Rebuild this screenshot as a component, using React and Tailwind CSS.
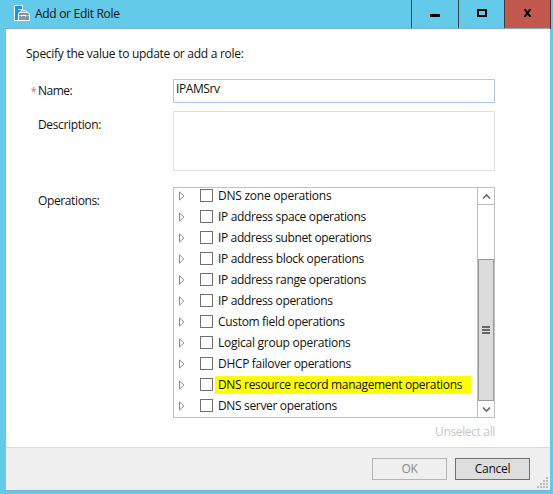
import { useState } from "react";

const operations = [
  { label: "DNS zone operations", spacing: "tracking-[-0.240px]" },
  { label: "IP address space operations", spacing: "tracking-[-0.340px]" },
  { label: "IP address subnet operations", spacing: "tracking-[-0.370px]" },
  { label: "IP address block operations", spacing: "tracking-[-0.320px]" },
  { label: "IP address range operations", spacing: "tracking-[-0.340px]" },
  { label: "IP address operations", spacing: "tracking-[-0.340px]" },
  { label: "Custom field operations", spacing: "tracking-[-0.320px]" },
  { label: "Logical group operations", spacing: "tracking-[-0.250px]" },
  { label: "DHCP failover operations", spacing: "tracking-[-0.320px]" },
  { label: "DNS resource record management operations", spacing: "tracking-[-0.340px]", marked: true },
  { label: "DNS server operations", spacing: "tracking-[-0.340px]" },
];

function ServerIcon() {
  return (
    <svg width="16" height="16" viewBox="0 0 16 16" className="block">
      <path d="M0.500 0.500h8v4.500l-4 3v7.500h-4z" fill="#2391d8" stroke="#fff" />
      <path d="M4 4.500h4" stroke="#fff" />
      <path d="M6.500 7.500V6.500l1-1h4l1 1v1" fill="none" stroke="#fff" />
      <path d="M4.500 8.500l1-1h8.500l1.500 1.500v6.500h-11z" fill="#8296aa" stroke="#fff" />
      <path d="M5 10.500h2.500M11.500 10.500h3.500" stroke="#b9c9d6" />
      <path d="M7.500 10v1.500M11.500 10v1.500M8 10.500h3" stroke="#fff" />
    </svg>
  );
}

function Operation({ label, spacing, marked }) {
  const [checked, setChecked] = useState(false);

  return (
    <div className="flex h-[21px] shrink-0 items-center">
      <svg width="6" height="10" viewBox="0 0 6 10" className="ml-[5px] shrink-0">
        <path d="M0.500 0.900v8.200L4.900 5z" fill="#fff" stroke="#8c8c8c" />
      </svg>
      <button
        onClick={() => setChecked(!checked)}
        className={`ml-[15px] h-[13px] w-[13px] shrink-0 border border-[#707070] ${checked ? "bg-gray-500" : "bg-white"}`}
      />
      <span
        className={`ml-[2px] flex h-[18px] items-center whitespace-nowrap pl-[3px] ${spacing} ${marked ? "w-[256px] bg-[#ffff00]" : ""}`}
      >
        {label}
      </span>
    </div>
  );
}

function Scrollbar() {
  return (
    <div className="flex w-[17px] shrink-0 flex-col border-l border-[#bdbdbd] pt-px">
      <div className="flex h-[16px] shrink-0 items-center justify-center border-b border-[#bdbdbd]">
        <svg width="9" height="7" viewBox="0 0 9 7">
          <path d="M1 5.500l3.500-3.500L8 5.500" fill="none" stroke="#666" strokeWidth="1.600" />
        </svg>
      </div>
      <div className="h-[54px] shrink-0" />
      <div className="flex flex-1 flex-col items-center justify-center gap-px border border-[#999] bg-[#dcdcdc]">
        <div className="h-[2px] w-[8px] bg-[#666]" />
        <div className="h-[2px] w-[8px] bg-[#666]" />
        <div className="h-[2px] w-[8px] bg-[#666]" />
      </div>
      <div className="flex h-[16px] shrink-0 items-center justify-center">
        <svg width="9" height="7" viewBox="0 0 9 7">
          <path d="M1 1.500L4.500 5 8 1.500" fill="none" stroke="#666" strokeWidth="1.600" />
        </svg>
      </div>
    </div>
  );
}

function TitleBar() {
  return (
    <header className="flex h-[29px] shrink-0">
      <div className="flex flex-1 items-start pl-[14px] pt-[5px]">
        <ServerIcon />
        <h1 className="ml-[5px] text-[12px] leading-[18px] tracking-[-0.300px]">Add or Edit Role</h1>
      </div>
      <button className="flex w-[48px] border border-t-0 border-[#37404a] pl-[18px] pt-[14px]">
        <span className="block h-[3px] w-[10px] bg-black" />
      </button>
      <button className="flex w-[46px] border-b border-r border-[#37404a] pl-[18px] pt-[9px]">
        <span className="block h-[8px] w-[10px] border-2 border-black" />
      </button>
      <button className="flex w-[46px] border-b border-r border-[#4a3034] bg-[#c3594e] pl-[18px] pt-[9px]">
        <svg width="10" height="8" viewBox="0 0 10 8">
          <path d="M1.500 0l6 8M7.500 0l-6 8" stroke="#000" strokeWidth="2" />
        </svg>
      </button>
      <div className="w-[2px]" />
    </header>
  );
}

export default function App() {
  const [name, setName] = useState("IPAMSrv");
  const [description, setDescription] = useState("");

  return (
    <div className="flex h-[494px] w-[553px] flex-col overflow-hidden bg-[#64cae9] font-['Open_Sans',sans-serif] text-[12px] leading-[18px] tracking-[-0.270px] text-[#111]">
      <TitleBar />

      <main className="-mt-px ml-[6px] mr-[3px] flex h-[419px] shrink-0 flex-col border-t border-[#7fb0c6] bg-white pl-[20px] pr-[55px]">
        <p className="mt-[16px]">Specify the value to update or add a role:</p>

        <div className="mt-[16px] flex h-[24px]">
          <div className="flex w-[147px] pt-[3px]">
            <span className="w-[12px] pl-[5px] text-[10px] text-[#f4506a]">*</span>
            <label htmlFor="name" className="tracking-[-0.500px]">Name:</label>
          </div>
          <input
            id="name"
            value={name}
            onChange={(e) => setName(e.target.value)}
            className="w-[322px] border border-[#abcbe8] pb-[4px] pl-[2px] tracking-[-0.400px] outline-none"
          />
        </div>

        <div className="mt-[8px] flex h-[60px]">
          <label htmlFor="description" className="w-[147px] pl-[12px] pt-[5px] tracking-[-0.350px]">
            Description:
          </label>
          <textarea
            id="description"
            value={description}
            onChange={(e) => setDescription(e.target.value)}
            className="w-[322px] resize-none border border-[#dcdfe3] outline-none"
          />
        </div>

        <div className="mt-[16px] flex h-[231px]">
          <div className="w-[147px] pl-[12px] pt-[5px] tracking-[-0.380px]">Operations:</div>
          <div className="flex w-[322px] overflow-hidden border border-[#c0c0c0]">
            <div className="-mt-[3px] flex flex-1 flex-col">
              {operations.map((op) => (
                <Operation key={op.label} label={op.label} spacing={op.spacing} marked={op.marked} />
              ))}
            </div>
            <Scrollbar />
          </div>
        </div>

        <div className="mt-[5px] text-right tracking-[-0.350px] text-[#c6c6c6]">Unselect all</div>
      </main>

      <footer className="ml-[6px] mr-[3px] flex h-[43px] shrink-0 border-t border-[#d9d9d9] bg-[#efefef] pt-[10px]">
        <button className="ml-[366px] flex h-[22px] w-[75px] items-center justify-center border border-[#b5b5b5] text-[#8a8a8a]">
          OK
        </button>
        <button className="ml-[8px] flex h-[22px] w-[75px] items-center justify-center border border-[#707070] bg-[#dddddd]">
          Cancel
        </button>
        <svg width="11" height="11" viewBox="0 0 11 11" className="ml-[7px] mt-[19px]">
          <path
            d="M9 0h2v2H9zM6 3h2v2H6zM9 3h2v2H9zM3 6h2v2H3zM6 6h2v2H6zM9 6h2v2H9zM0 9h2v2H0zM3 9h2v2H3zM6 9h2v2H6zM9 9h2v2H9z"
            fill="#bcbcbc"
          />
        </svg>
      </footer>
      <div className="ml-[6px] mr-[3px] h-px bg-[#6fb6d4]" />
    </div>
  );
}
